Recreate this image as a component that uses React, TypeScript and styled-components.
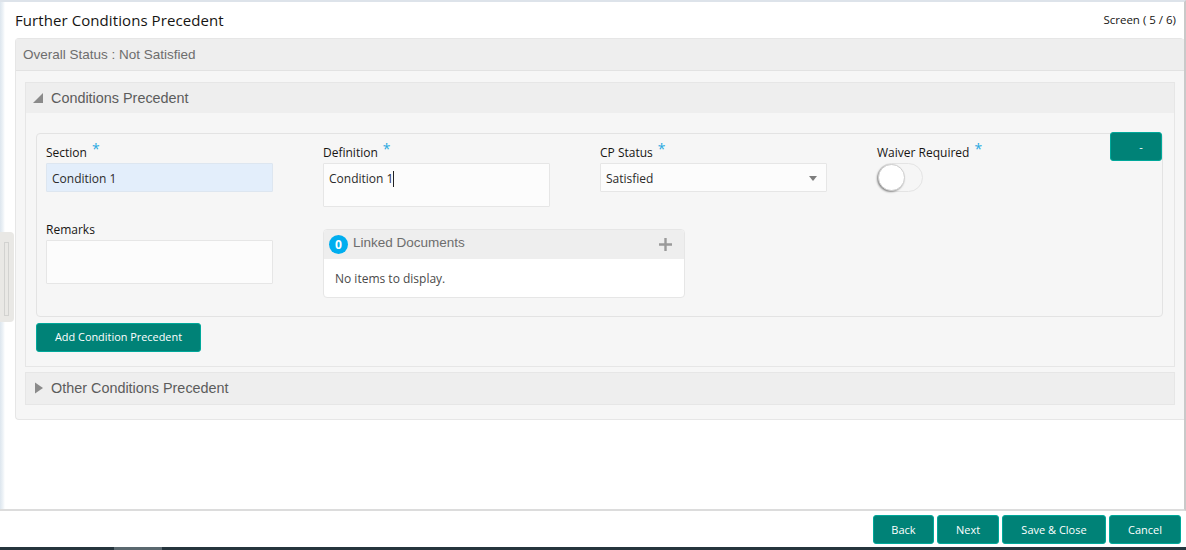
import React from "react";
import styled, { createGlobalStyle } from "styled-components";

const Global = createGlobalStyle`
  html, body { margin: 0; padding: 0; background: #fff; overflow: hidden; }
  * { box-sizing: border-box; }
`;

const ui = `"Open Sans", "Noto Sans", sans-serif`;
const arial = `"Liberation Sans", Arial, sans-serif`;

const Page = styled.div`
  width: 1186px;
  height: 550px;
  display: flex;
  flex-direction: column;
  position: relative;
  background: #fff;
  font-family: ${ui};
  overflow: hidden;
`;
const Main = styled.main`
  height: 511px;
  flex: none;
  border-top: 2px solid #dde3ea;
  border-bottom: 2px solid #dcdcdc;
  border-right: 2px solid #c9c9c9;
  padding: 0 0 0 15px;
  background: linear-gradient(to right, #dde6ee 0, #eef3f7 3px, #fff 5px);
`;
const TitleBar = styled.header`
  height: 36px;
  display: flex;
  align-items: center;
  justify-content: space-between;
  padding: 0 8px 0 0;
`;
const Title = styled.h1`
  margin: 0;
  font-size: 15px;
  font-weight: 400;
  color: #161513;
  letter-spacing: 0.08px;
`;
const Pager = styled.span`
  font-size: 11.5px;
  color: #161513;
  position: relative;
  top: -1px;
`;
const Card = styled.section`
  height: 382px;
  background: #f6f6f6;
  border: 1px solid #e6e6e6;
  border-right: none;
  border-radius: 4px 4px 0 4px;
`;
const StatusBar = styled.div`
  height: 32px;
  display: flex;
  align-items: center;
  padding: 0 7px 1px;
  background: #eeeeee;
  border-bottom: 1px solid #e2e2e2;
  font: 13.5px ${arial};
  color: #6d6d6d;
`;
const CardBody = styled.div`
  padding: 11px 9px 0;
  display: flex;
  flex-direction: column;
  gap: 5px;
`;
const Section = styled.div`
  border: 1px solid #e6e6e6;
  background: #f6f6f6;
`;
const SectionHead = styled.div<{ $h: number; $lift?: boolean }>`
  height: ${(p) => p.$h}px;
  display: flex;
  align-items: center;
  gap: 6px;
  padding: 0 0 ${(p) => (p.$lift ? 2 : 0)}px 7px;
  background: #eeeeee;
  font: 14.4px ${arial};
  color: #5c5c5c;
`;
const Arrow = styled.svg`
  width: 12px;
  height: 12px;
  flex: none;
  fill: #8a8a8a;
`;
const SectionBody = styled.div`
  padding: 20px 11px 14px 10px;
  position: relative;
`;
const Box = styled.div`
  height: 184px;
  border: 1px solid #e3e3e3;
  border-radius: 4px;
  padding: 7px 9px 0;
  display: grid;
  grid-template-columns: repeat(4, 277px);
  grid-template-rows: 77px 1fr;
`;
const Field = styled.div`
  display: flex;
  flex-direction: column;
  align-items: flex-start;
`;
const Label = styled.label`
  height: 22px;
  display: flex;
  align-items: flex-end;
  padding-bottom: 2px;
  font-size: 12px;
  color: #161513;
`;
const Star = styled.span`
  color: #29a9e1;
  font-size: 14px;
  margin-left: 5px;
  position: relative;
  top: -5px;
  line-height: 1;
`;
const Input = styled.div<{ $h?: number; $fill?: boolean }>`
  width: 227px;
  height: ${(p) => p.$h ?? 29}px;
  padding: 7px 5px 5px;
  border: 1px solid ${(p) => (p.$fill ? "#dde6f0" : "#e6e6e6")};
  border-radius: 1px;
  background: ${(p) => (p.$fill ? "#e3eefb" : "#fcfcfc")};
  font-size: 12px;
  line-height: 16px;
  color: #2b2b2b;
  display: flex;
  align-items: flex-start;
  justify-content: space-between;
`;
const Caret = styled.span`
  display: inline-block;
  width: 1px;
  height: 16px;
  background: #222;
  vertical-align: top;
`;
const SelectArrow = styled.span`
  width: 0;
  height: 0;
  margin: 5px 4px 0 0;
  border-left: 4px solid transparent;
  border-right: 4px solid transparent;
  border-top: 5px solid #7d7d7d;
`;
const SwitchTrack = styled.div`
  width: 46px;
  height: 29px;
  border: 1px solid #e4e4e4;
  border-radius: 15px;
  position: relative;
  background: #f6f6f6;
`;
const SwitchKnob = styled.div`
  position: absolute;
  left: 0;
  top: 0;
  width: 27px;
  height: 27px;
  border-radius: 50%;
  background: #fff;
  border: 1px solid #cfcfcf;
  box-shadow: -1px 1px 2px rgba(0, 0, 0, 0.4);
`;
const Linked = styled.div`
  grid-column: span 2;
  width: 362px;
  height: 69px;
  margin-top: 11px;
  border: 1px solid #e6e6e6;
  border-radius: 4px;
  background: #fff;
  overflow: hidden;
`;
const LinkedHead = styled.div`
  height: 29px;
  display: flex;
  align-items: center;
  padding: 0 12px 0 5px;
  background: #eeeeee;
  font: 13.5px ${arial};
  color: #6d6d6d;
`;
const Badge = styled.span`
  width: 19px;
  height: 19px;
  border-radius: 50%;
  background: #00aeef;
  color: #fff;
  font: bold 12px ${ui};
  display: flex;
  align-items: center;
  justify-content: center;
  margin: 0 5px 0 0;
`;
const LinkedTitle = styled.span`
  flex: 1;
  position: relative;
  top: -2px;
`;
const Plus = styled.svg`
  width: 13px;
  height: 13px;
  stroke: #9a9a9a;
  stroke-width: 2.4;
`;
const LinkedBody = styled.div`
  padding: 11px;
  font-size: 12px;
  line-height: 17px;
  color: #4a4a4a;
`;
const Button = styled.button<{ $w: number }>`
  width: ${(p) => p.$w}px;
  height: 29px;
  padding: 0;
  border: 1px solid #00a89a;
  border-radius: 3px;
  background: #008277;
  color: #fff;
  font-family: ${ui};
  font-size: 11px;
  cursor: pointer;
`;
const AddButton = styled(Button)`
  display: block;
  margin-top: 6px;
  padding-bottom: 2px;
  font-size: 10.9px;
`;
const MinusButton = styled(Button)`
  position: absolute;
  top: 19px;
  right: 12px;
  padding-left: 10px;
`;
const Footer = styled.footer`
  height: 36px;
  flex: none;
  display: flex;
  justify-content: flex-end;
  align-items: flex-start;
  gap: 3px;
  padding: 4px 5px 0 0;
`;
const Strip = styled.div`
  height: 3px;
  flex: none;
  background: #26353d;
  padding-left: 114px;
`;
const StripTab = styled.div`
  width: 48px;
  height: 3px;
  background: #5a686f;
`;
const Handle = styled.div`
  position: absolute;
  left: 0;
  top: 232px;
  width: 14px;
  height: 90px;
  background: #e9e8e5;
  border-radius: 0 4px 4px 0;
  padding: 10px 0 0 4px;
`;
const HandleGrip = styled.div`
  width: 5px;
  height: 74px;
  border: 1px solid #d2d2d0;
`;

export default function App() {
  return (
    <Page>
      <Global />
      <Main>
        <TitleBar>
          <Title>Further Conditions Precedent</Title>
          <Pager>Screen ( 5 / 6)</Pager>
        </TitleBar>
        <Card>
          <StatusBar>Overall Status : Not Satisfied</StatusBar>
          <CardBody>
            <Section>
              <SectionHead $h={30}>
                <Arrow viewBox="0 0 12 12"><path d="M0 11 L10 1 V11 Z" /></Arrow>
                Conditions Precedent
              </SectionHead>
              <SectionBody>
                <MinusButton $w={52}>-</MinusButton>
                <Box>
                  <Field>
                    <Label>Section<Star>*</Star></Label>
                    <Input $fill>Condition 1</Input>
                  </Field>
                  <Field>
                    <Label>Definition<Star>*</Star></Label>
                    <Input $h={44}><span>Condition 1<Caret /></span></Input>
                  </Field>
                  <Field>
                    <Label>CP Status<Star>*</Star></Label>
                    <Input>Satisfied<SelectArrow /></Input>
                  </Field>
                  <Field>
                    <Label>Waiver Required<Star>*</Star></Label>
                    <SwitchTrack><SwitchKnob /></SwitchTrack>
                  </Field>
                  <Field>
                    <Label>Remarks</Label>
                    <Input $h={44} />
                  </Field>
                  <Linked>
                    <LinkedHead>
                      <Badge>0</Badge>
                      <LinkedTitle>Linked Documents</LinkedTitle>
                      <Plus viewBox="0 0 13 13"><path d="M6.5 0 V13 M0 6.5 H13" /></Plus>
                    </LinkedHead>
                    <LinkedBody>No items to display.</LinkedBody>
                  </Linked>
                </Box>
                <AddButton $w={165}>Add Condition Precedent</AddButton>
              </SectionBody>
            </Section>
            <Section>
              <SectionHead $h={31} $lift>
                <Arrow viewBox="0 0 12 12"><path d="M2 0.5 L10 6 L2 11.5 Z" /></Arrow>
                Other Conditions Precedent
              </SectionHead>
            </Section>
          </CardBody>
        </Card>
      </Main>
      <Footer>
        <Button $w={61}>Back</Button>
        <Button $w={62}>Next</Button>
        <Button $w={104}>Save &amp; Close</Button>
        <Button $w={72}>Cancel</Button>
      </Footer>
      <Strip><StripTab /></Strip>
      <Handle><HandleGrip /></Handle>
    </Page>
  );
}
